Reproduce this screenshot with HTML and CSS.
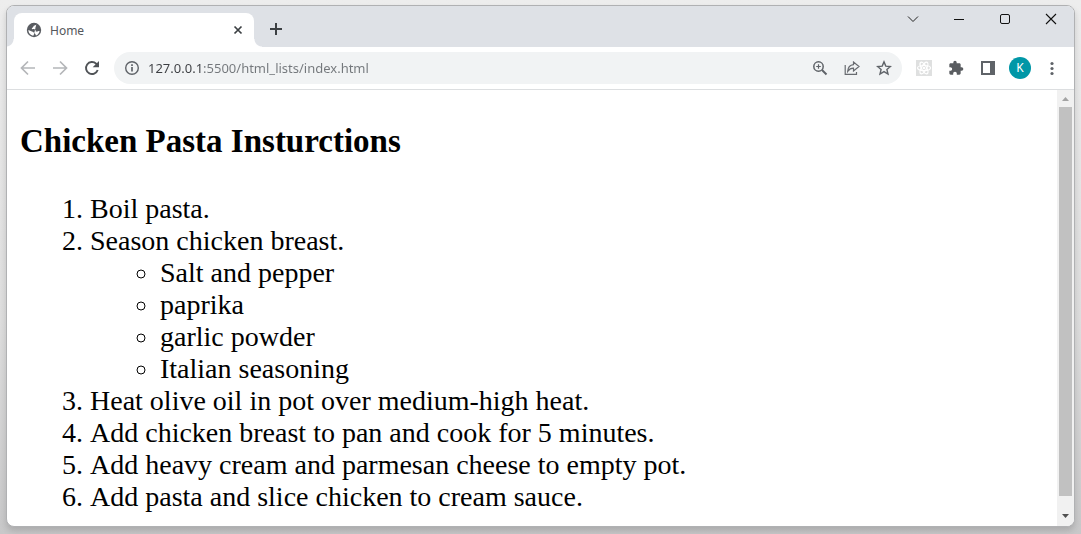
FILE: index.html
```html
<!DOCTYPE html>
<html lang="en">
<head>
    <meta charset="UTF-8">
    <meta name="viewport" content="width=device-width, initial-scale=1.0">
    <title>Home</title>
    <link rel="stylesheet" href="styles.css">
</head>
<body>
    <div class="window">
        <header class="tabstrip">
            <div class="tab">
                <svg class="globe" width="16" height="16" viewBox="0 0 16 16">
                    <circle cx="8" cy="8" r="7.200" fill="#5a5d62"/>
                    <path d="M10.300 2.600C10 3.800 7.600 3.200 7.300 4.700c-.2 1.100-1.500.9-1.500 1.900 0 1.100 2.700.3 3.500 1.300.7.900 0 1.500 1.100 1.700 1.300.2 1.600-.8 3.200-.7-.3 2.100-1.700 3.900-3.700 4.600-.2-1.100-.6-1.600-1.300-2.200-.9-.8-1.400-1.600-2.700-1.900L2.400 8C2.300 11 4.600 13.300 7.300 13.700l.6-1.300" fill="#fff"/>
                    <path d="M9.500 5.300c1-.4 1.900-.2 2.500-1 .9.900 1.500 2 1.600 3.300-1 .5-1.500.7-2.100.3-.7-.5-.7-1.900-2-2.600z" fill="#5a5d62"/>
                </svg>
                <span class="tab-title">Home</span>
                <button class="icon-button tab-close" aria-label="Close tab">
                    <svg width="10" height="10" viewBox="0 0 10 10"><path d="M1.500 1.500l7 7M8.500 1.500l-7 7" stroke="#3c4043" stroke-width="1.700"/></svg>
                </button>
            </div>
            <button class="icon-button new-tab" aria-label="New tab">
                <svg width="14" height="14" viewBox="0 0 14 14"><path d="M7 1v12M1 7h12" stroke="#3c4043" stroke-width="2"/></svg>
            </button>
            <div class="window-controls">
                <button class="icon-button control" aria-label="Search tabs">
                    <svg width="12" height="12" viewBox="0 0 12 12"><path d="M1 3.500l5 5 5-5" fill="none" stroke="#222" stroke-width="1"/></svg>
                </button>
                <button class="icon-button control" aria-label="Minimize">
                    <svg width="12" height="12" viewBox="0 0 12 12"><path d="M1 6.500h10" stroke="#111"/></svg>
                </button>
                <button class="icon-button control" aria-label="Maximize">
                    <svg width="12" height="12" viewBox="0 0 12 12"><rect x="1.500" y="1.500" width="9" height="9" rx="1.500" fill="none" stroke="#111"/></svg>
                </button>
                <button class="icon-button control" aria-label="Close">
                    <svg width="12" height="12" viewBox="0 0 12 12"><path d="M1 1l10 10M11 1L1 11" stroke="#111" stroke-width="1.100"/></svg>
                </button>
            </div>
        </header>

        <nav class="toolbar">
            <button class="icon-button" aria-label="Back">
                <svg width="16" height="16" viewBox="0 0 16 16"><path d="M15 8H2M8 1.500L1.500 8 8 14.500" fill="none" stroke="#b4b6b9" stroke-width="1.700"/></svg>
            </button>
            <button class="icon-button" aria-label="Forward">
                <svg width="16" height="16" viewBox="0 0 16 16"><path d="M1 8h13M8 1.500L14.500 8 8 14.500" fill="none" stroke="#b4b6b9" stroke-width="1.700"/></svg>
            </button>
            <button class="icon-button" aria-label="Reload">
                <svg width="16" height="16" viewBox="0 0 16 16"><path d="M13.700 10a6 6 0 1 1-1.500-6.300L14 5.500" fill="none" stroke="#505357" stroke-width="1.900"/><path d="M15 1v6.300H8.700z" fill="#505357"/></svg>
            </button>
            <div class="omnibox">
                <button class="icon-button info" aria-label="View site information">
                    <svg width="16" height="16" viewBox="0 0 16 16"><circle cx="8" cy="8" r="6.300" fill="none" stroke="#5f6368" stroke-width="1.400"/><path d="M8 7v4.500M8 4.300v1.700" stroke="#5f6368" stroke-width="1.700"/></svg>
                </button>
                <input class="address" type="text" aria-label="Address" value="127.0.0.1:5500/html_lists/index.html">
                <button class="icon-button" aria-label="Zoom">
                    <svg width="16" height="16" viewBox="0 0 16 16"><circle cx="6.500" cy="6.500" r="4.700" fill="none" stroke="#5f6368" stroke-width="1.500"/><path d="M10 10l4.500 4.500" stroke="#5f6368" stroke-width="1.900"/><path d="M6.500 4.200v4.600M4.200 6.500h4.600" stroke="#5f6368" stroke-width="1.200"/></svg>
                </button>
                <button class="icon-button" aria-label="Share">
                    <svg width="16" height="16" viewBox="0 0 16 16"><path d="M1.200 5v9.300h11.300V12M9.500 2v2.700C6 5 4 7.500 3.700 11.300 5.300 9 7 8.200 9.500 8.200V11L15 6.500z" fill="none" stroke="#686b70" stroke-width="1.200"/></svg>
                </button>
                <button class="icon-button" aria-label="Bookmark this tab">
                    <svg width="16" height="16" viewBox="0 0 16 16"><path d="M8 1.900l1.800 4.200 4.600.4-3.500 3 1.100 4.500L8 11.600 4 14l1.100-4.500-3.500-3 4.600-.4z" fill="none" stroke="#5f6368" stroke-width="1.400"/></svg>
                </button>
            </div>
            <button class="icon-button" aria-label="React Developer Tools">
                <svg width="16" height="16" viewBox="0 0 16 16">
                    <rect width="16" height="16" fill="#dfe0e0"/>
                    <g fill="none" stroke="#fff" stroke-width="1.200">
                        <ellipse cx="8" cy="8" rx="6.500" ry="2.500"/>
                        <ellipse cx="8" cy="8" rx="6.500" ry="2.500" transform="rotate(60 8 8)"/>
                        <ellipse cx="8" cy="8" rx="6.500" ry="2.500" transform="rotate(120 8 8)"/>
                    </g>
                    <circle cx="8" cy="8" r="1.300" fill="#fff"/>
                </svg>
            </button>
            <button class="icon-button" aria-label="Extensions">
                <svg width="16" height="16" viewBox="0 0 24 24"><path fill="#5a5d61" d="M20.500 11H19V7c0-1.100-.9-2-2-2h-4V3.500a2.500 2.500 0 0 0-5 0V5H4c-1.100 0-2 .9-2 2v3.800h1.500c1.500 0 2.700 1.200 2.700 2.700S5 16.200 3.500 16.200H2V20c0 1.100.9 2 2 2h3.800v-1.500c0-1.500 1.200-2.700 2.700-2.700s2.700 1.200 2.700 2.700V22H17c1.100 0 2-.9 2-2v-4h1.500a2.500 2.500 0 0 0 0-5z"/></svg>
            </button>
            <button class="icon-button" aria-label="Side panel">
                <svg width="16" height="16" viewBox="0 0 16 16"><rect x="2" y="2" width="12" height="12" fill="none" stroke="#5f6368" stroke-width="2"/><path d="M10 1h5v14h-5z" fill="#5f6368"/></svg>
            </button>
            <button class="icon-button" aria-label="Profile"><span class="avatar">K</span></button>
            <button class="icon-button" aria-label="Menu">
                <svg width="16" height="16" viewBox="0 0 16 16" fill="#5f6368"><circle cx="8" cy="3.500" r="1.600"/><circle cx="8" cy="8.500" r="1.600"/><circle cx="8" cy="13.500" r="1.600"/></svg>
            </button>
        </nav>

        <div class="viewport">
            <main class="page">
                <h3>Chicken Pasta Insturctions</h3>
                <ol>
                    <li>Boil pasta.</li>
                    <li>Season chicken breast.
                        <ul>
                            <li>Salt and pepper</li>
                            <li>paprika</li>
                            <li>garlic powder</li>
                            <li>Italian seasoning</li>
                        </ul>
                    </li>
                    <li>Heat olive oil in pot over medium-high heat.</li>
                    <li>Add chicken breast to pan and cook for 5 minutes.</li>
                    <li>Add heavy cream and parmesan cheese to empty pot.</li>
                    <li>Add pasta and slice chicken to cream sauce.</li>
                </ol>
            </main>
            <div class="scrollbar">
                <button class="scroll-button" aria-label="Scroll up">
                    <svg width="7" height="4" viewBox="0 0 7 4"><path d="M0 4L3.500 0 7 4z" fill="#a3a3a3"/></svg>
                </button>
                <div class="thumb"></div>
                <button class="scroll-button scroll-down" aria-label="Scroll down">
                    <svg width="7" height="4" viewBox="0 0 7 4"><path d="M0 0l3.500 4L7 0z" fill="#505050"/></svg>
                </button>
            </div>
        </div>
    </div>
</body>
</html>
```
FILE: styles.css
```css
* {
    box-sizing: border-box;
}

body {
    margin: 0;
    padding: 5px 6px 7px;
    min-height: 100vh;
    display: flex;
    background: linear-gradient(#ededed, #dedede 60%, #c8c8c9);
    font-family: "Noto Sans", "Open Sans", sans-serif;
}

.window {
    flex: 1;
    display: flex;
    flex-direction: column;
    border: 1px solid #b0b1b3;
    border-radius: 8px;
    background: #fff;
    box-shadow: 0 4px 6px rgba(0, 0, 0, 0.15);
    overflow: hidden;
}

.icon-button {
    display: flex;
    align-items: center;
    justify-content: center;
    width: 32px;
    height: 32px;
    padding: 0;
    border: none;
    background: none;
    font-family: inherit;
}

/* Tabs */
.tabstrip {
    display: flex;
    height: 41px;
    padding: 7px 0 0 7px;
    background: #dee1e6;
}

.tab {
    position: relative;
    display: flex;
    align-items: center;
    width: 240px;
    padding: 0 6px 0 12px;
    border-radius: 8px 8px 0 0;
    background: #fff;
}

/* Curved feet on both sides of the tab */
.tab::before,
.tab::after {
    content: "";
    position: absolute;
    bottom: 0;
    width: 8px;
    height: 8px;
}

.tab::before {
    right: 100%;
    background: radial-gradient(circle at 0 0, transparent 7px, #fff 8px);
}

.tab::after {
    left: 100%;
    background: radial-gradient(circle at 100% 0, transparent 7px, #fff 8px);
}

.tab-title {
    flex: 1;
    padding-left: 8px;
    font-size: 12px;
    color: #54575b;
}

.tab-close {
    width: 20px;
    height: 20px;
}

.new-tab {
    margin-left: 6px;
}

.window-controls {
    display: flex;
    margin-left: auto;
    margin-top: -7px;
}

.control {
    width: 46px;
    height: 26px;
}

/* Toolbar */
.toolbar {
    display: flex;
    align-items: center;
    height: 43px;
    padding: 0 6px 0 5px;
    border-bottom: 1px solid #dcdee0;
}

.omnibox {
    flex: 1;
    display: flex;
    align-items: center;
    height: 32px;
    margin: 0 6px;
    padding: 0 2px;
    border-radius: 16px;
    background: #f1f3f4;
}

/* The host part of the address is darker than the path */
.address {
    flex: 1;
    min-width: 0;
    padding: 0;
    border: none;
    font-family: inherit;
    font-size: 13px;
    color: transparent;
    background: linear-gradient(90deg, #3c3e42 54px, #73777b 54px);
    -webkit-background-clip: text;
    background-clip: text;
}

.avatar {
    width: 22px;
    height: 22px;
    border-radius: 50%;
    background: #0097a7;
    color: #fff;
    font-size: 12px;
    line-height: 22px;
}

/* Page */
.viewport {
    flex: 1;
    display: flex;
}

.page {
    flex: 1;
    padding: 0 13px;
    font-family: "Liberation Serif", "Times New Roman", serif;
    font-size: 28px;
    line-height: 32px;
    color: #000;
}

.page h3 {
    margin: 33px 0;
    font-size: 33px;
    line-height: 37px;
}

.page ol,
.page ul {
    margin: 0;
    padding-left: 70px;
}

.scrollbar {
    display: flex;
    flex-direction: column;
    width: 17px;
    padding: 0 2px;
    background: #f1f1f1;
}

.scroll-button {
    display: flex;
    align-items: center;
    justify-content: center;
    height: 17px;
    padding: 0;
    border: none;
    background: none;
}

.thumb {
    flex: 1;
    background: #c1c1c1;
}

.scroll-down {
    height: 30px;
    padding-top: 10px;
}
```
